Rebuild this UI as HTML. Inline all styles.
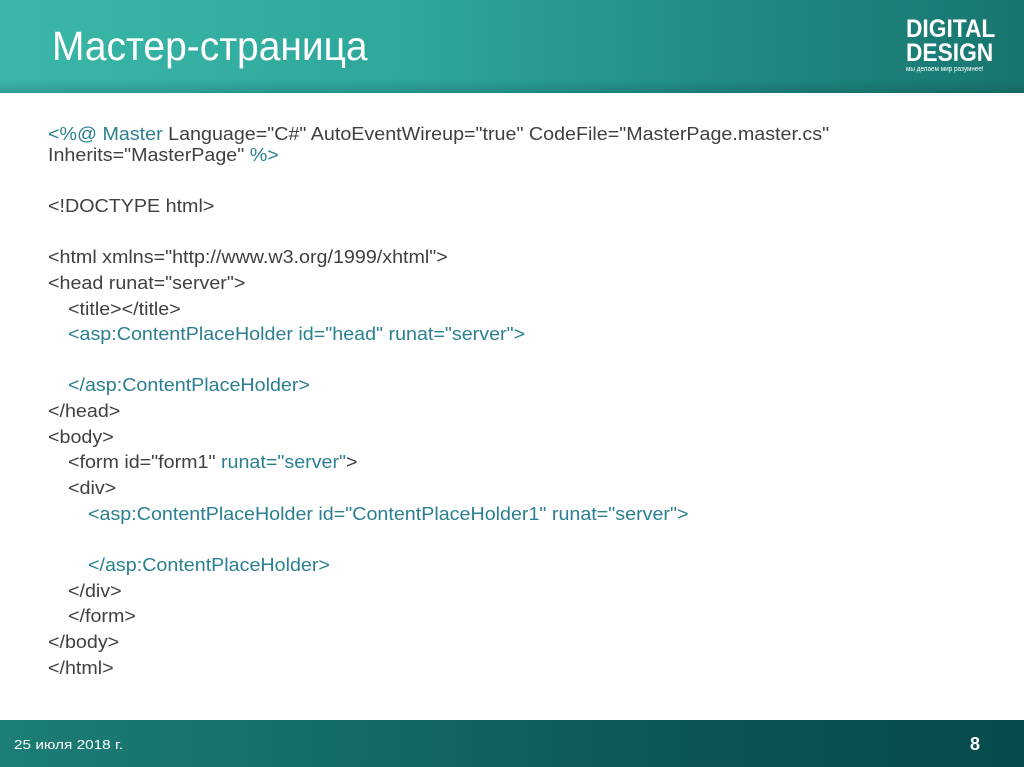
<!DOCTYPE html>
<html><head><meta charset="utf-8"><style>
*{margin:0;padding:0}
body{width:1024px;height:767px;position:relative;overflow:hidden;background:#fff;font-family:"Liberation Sans",sans-serif}
.hd{position:absolute;left:0;top:0;width:1024px;height:93px;background:linear-gradient(90deg,#3ab7a8 0%,#2ea79b 40%,#1f8880 75%,#187670 100%)}
.hd:after{content:"";position:absolute;left:0;right:0;bottom:0;height:14px;background:linear-gradient(180deg,rgba(0,0,0,0),rgba(0,40,40,.18))}
.tt{position:absolute;left:52px;top:23px;color:#fff;font-size:41px;transform:scaleX(.95);transform-origin:left;white-space:nowrap}
.lg{position:absolute;left:906px;top:17px;color:#fff;font-weight:bold;font-size:25px;line-height:24px;transform:scaleX(.91);transform-origin:left}
.lg small{display:block;font-size:7px;line-height:10px;font-weight:normal}
.ft{position:absolute;left:0;top:720px;width:1024px;height:47px;background:linear-gradient(90deg,#1c7e76 0%,#136a66 35%,#0b5656 65%,#064a4c 100%)}
.ft span{position:absolute;color:#fff}
.l{position:absolute;left:48px;font-size:18px;color:#404040;white-space:nowrap;transform:scaleX(1.094);transform-origin:left;line-height:20px}
.b{color:#2a7f90}
</style></head><body>
<div class="hd"><div class="tt">Мастер-страница</div>
<div class="lg">DIGITAL<br>DESIGN<small>мы делаем мир разумнее!</small></div></div>
<div class="l" style="top:124px"><span class="b">&lt;%@ Master</span> Language="C#" AutoEventWireup="true" CodeFile="MasterPage.master.cs"</div>
<div class="l" style="top:145px">Inherits="MasterPage" <span class="b">%&gt;</span></div>
<div class="l" style="top:196px">&lt;!DOCTYPE html&gt;</div>
<div class="l" style="top:247px">&lt;html xmlns="http://www.w3.org/1999/xhtml"&gt;</div>
<div class="l" style="top:273px">&lt;head runat="server"&gt;</div>
<div class="l" style="top:299px;left:68px">&lt;title&gt;&lt;/title&gt;</div>
<div class="l b" style="top:324px;left:68px">&lt;asp:ContentPlaceHolder id="head" runat="server"&gt;</div>
<div class="l b" style="top:375px;left:68px">&lt;/asp:ContentPlaceHolder&gt;</div>
<div class="l" style="top:401px">&lt;/head&gt;</div>
<div class="l" style="top:427px">&lt;body&gt;</div>
<div class="l" style="top:452px;left:68px">&lt;form id="form1" <span class="b">runat="server"</span>&gt;</div>
<div class="l" style="top:478px;left:68px">&lt;div&gt;</div>
<div class="l b" style="top:504px;left:88px">&lt;asp:ContentPlaceHolder id="ContentPlaceHolder1" runat="server"&gt;</div>
<div class="l b" style="top:555px;left:88px">&lt;/asp:ContentPlaceHolder&gt;</div>
<div class="l" style="top:581px;left:68px">&lt;/div&gt;</div>
<div class="l" style="top:606px;left:68px">&lt;/form&gt;</div>
<div class="l" style="top:632px">&lt;/body&gt;</div>
<div class="l" style="top:658px">&lt;/html&gt;</div>
<div class="ft"><span style="left:14px;top:17px;font-size:13px;transform:scaleX(1.18);transform-origin:left;white-space:nowrap">25 июля 2018 г.</span><span style="left:970px;top:14px;font-size:18px;font-weight:bold">8</span></div>
</body></html>
